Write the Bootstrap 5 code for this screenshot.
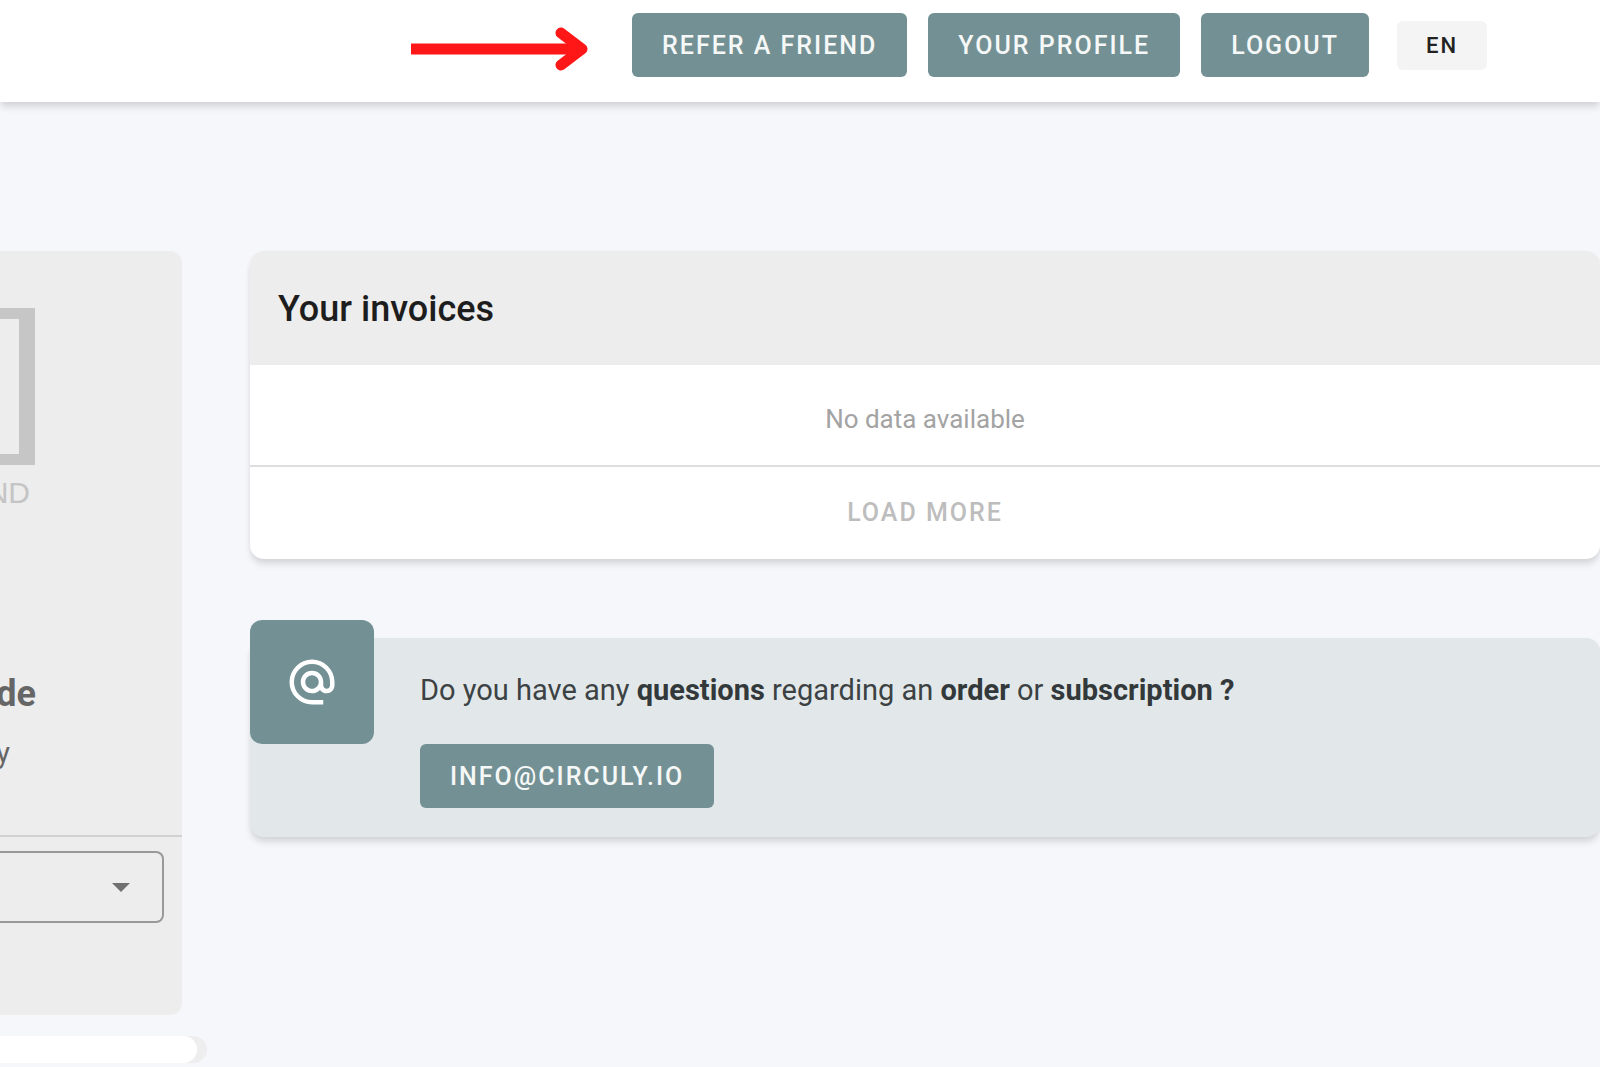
<!DOCTYPE html>
<html lang="en">
<head>
<meta charset="utf-8">
<meta name="viewport" content="width=device-width, initial-scale=1">
<title>Your account</title>
<link rel="stylesheet" href="https://cdn.jsdelivr.net/npm/bootstrap@5.3.0/dist/css/bootstrap.min.css">
<style>
  :root { --teal: #739194; --soft: #ededed; --drop: 0 6px 7px -1px rgba(0,0,0,.13), 0 1px 4px rgba(0,0,0,.03); }
  body { background: #f5f7fb; font-family: Roboto, "Liberation Sans", sans-serif; overflow-x: hidden; }
  .topbar { min-height: 102px; padding: 13px 113px 25px 0; gap: 21px; box-shadow: var(--drop); }
  .pointer { width: 178px; height: 44px; margin: 7px 22px 0 0; }
  .btn-teal { --bs-btn-color: #f6f8f8; --bs-btn-bg: var(--teal); --bs-btn-hover-color: #fff; --bs-btn-hover-bg: #65868a;
    --bs-btn-active-bg: #5b7b7f; --bs-btn-active-color: #fff; --bs-btn-border-radius: 6px; --bs-btn-border-width: 0;
    --bs-btn-padding-x: 30px; --bs-btn-padding-y: 0; --bs-btn-font-size: 25px; --bs-btn-font-weight: 500;
    height: 64px; line-height: 65px; letter-spacing: 2px; }
  .btn-lang { --bs-btn-bg: #f4f4f4; --bs-btn-color: #222; --bs-btn-hover-bg: #e8e8e8; --bs-btn-border-width: 0;
    --bs-btn-border-radius: 6px; --bs-btn-padding-x: 29px; --bs-btn-padding-y: 0; --bs-btn-font-size: 22px;
    --bs-btn-font-weight: 500; height: 49px; line-height: 49px; letter-spacing: 2px; margin-left: 7px; }
  .page-body { padding-top: 149px; gap: 43px; }
  .side-col { width: 207px; }
  .product { width: 182px; height: 764px; background: var(--soft); border-radius: 0 12px 12px 0; padding-top: 57px; }
  .brand-frame { width: 35px; height: 157px; border: solid #c6c6c6; border-width: 11px 16px 11px 0; }
  .brand-text { width: 30px; font: 30px/40px "Liberation Sans", sans-serif; color: #c4c4c4; margin-top: 8px; }
  .clip-end { display: flex; justify-content: flex-end; overflow: hidden; white-space: nowrap; }
  .product-name { width: 36px; font-size: 36px; line-height: 44px; font-weight: 700; color: #666; margin: 159px 0 0; }
  .product-by { width: 10px; font-size: 29px; line-height: 36px; color: #666; margin: 19px 0 0; }
  .product-foot { border-top: 2px solid #d2d2d2; padding: 14px 18px 0 0; margin-top: 64px; }
  .picker { height: 72px; background-color: transparent; border: 2px solid #999; border-left: 0; border-radius: 0 8px 8px 0;
    background-image: url("data:image/svg+xml,%3csvg xmlns='http://www.w3.org/2000/svg' viewBox='0 0 18 9'%3e%3cpath fill='%23707070' d='M0 0h18L9 9z'/%3e%3c/svg%3e");
    background-size: 18px 9px; background-position: right 32px center; }
  .strip { height: 27px; margin-top: 21px; background: #eee; border-radius: 0 14px 14px 0; padding-right: 10px; }
  .strip-fill { height: 27px; background: #fff; border-radius: 0 14px 14px 0; }
  .main-col { gap: 79px; min-width: 0; }
  .panel { border: 0; border-radius: 14px; box-shadow: var(--drop); }
  .panel-head { background: var(--soft); border: 0; border-radius: 14px 14px 0 0 !important; padding: 36px 28px 34px; }
  .panel-title { font-size: 36px; line-height: 44px; font-weight: 500; color: #1d1d1d; }
  .empty-row { height: 102px; line-height: 36px; padding-top: 36px; font-size: 26px; color: #a3a3a3; border-bottom: 2px solid #dedede; }
  .btn-more { height: 92px; font-size: 25px; font-weight: 500; letter-spacing: 2px; border: 0; }
  .btn-more:disabled { color: #bdbdbd; opacity: 1; }
  .help { background: #e2e8e9; min-height: 199px; }
  .help-icon { width: 124px; height: 124px; margin-top: -18px; background: var(--teal); border-radius: 12px; }
  .help-body { padding: 33px 0 29px 46px; }
  .help-text { font-size: 29px; line-height: 38px; margin-bottom: 35px; color: #3c4244; }
  .help-text strong { font-weight: 700; color: #33393b; }
</style>
<script src="https://cdn.jsdelivr.net/npm/bootstrap@5.3.0/dist/js/bootstrap.bundle.min.js"></script>
</head>
<body>
<header class="topbar bg-white d-flex align-items-center justify-content-end">
  <svg class="pointer" viewBox="0 0 178 44" aria-hidden="true">
    <path d="M0 22H166" fill="none" stroke="#ff1616" stroke-width="11"/>
    <path d="M150 6 171 22 150 38" fill="none" stroke="#ff1616" stroke-width="11" stroke-linecap="round" stroke-linejoin="round"/>
  </svg>
  <button type="button" class="btn btn-teal">REFER A FRIEND</button>
  <button type="button" class="btn btn-teal">YOUR PROFILE</button>
  <button type="button" class="btn btn-teal">LOGOUT</button>
  <button type="button" class="btn btn-lang">EN</button>
</header>
<main class="page-body d-flex align-items-start">
  <aside class="side-col flex-shrink-0">
    <section class="product">
      <div class="brand-frame"></div>
      <div class="brand-text clip-end">ND</div>
      <h2 class="product-name clip-end">de</h2>
      <p class="product-by clip-end">y</p>
      <div class="product-foot">
        <select class="form-select picker" aria-label="Option"><option></option></select>
      </div>
    </section>
    <div class="strip"><div class="strip-fill"></div></div>
  </aside>
  <div class="main-col d-flex flex-column flex-grow-1">
    <section class="card panel">
      <div class="card-header panel-head"><h1 class="panel-title mb-0">Your invoices</h1></div>
      <div class="empty-row text-center">No data available</div>
      <button type="button" class="btn btn-more w-100" disabled>LOAD MORE</button>
    </section>
    <section class="card panel help flex-row align-items-start">
      <div class="help-icon d-flex align-items-center justify-content-center flex-shrink-0">
        <svg width="54" height="54" viewBox="0 0 24 24" fill="#fff" aria-hidden="true"><path d="M12,15C12.81,15 13.5,14.7 14.11,14.11C14.7,13.5 15,12.81 15,12C15,11.19 14.7,10.5 14.11,9.89C13.5,9.3 12.81,9 12,9C11.19,9 10.5,9.3 9.89,9.89C9.3,10.5 9,11.19 9,12C9,12.81 9.3,13.5 9.89,14.11C10.5,14.7 11.19,15 12,15M12,2C14.75,2 17.1,3 19.05,4.95C21,6.9 22,9.25 22,12V13.45C22,14.45 21.65,15.3 21,16C20.3,16.67 19.5,17 18.5,17C17.3,17 16.31,16.5 15.56,15.5C14.56,16.5 13.38,17 12,17C10.63,17 9.45,16.5 8.46,15.54C7.5,14.55 7,13.38 7,12C7,10.63 7.5,9.45 8.46,8.46C9.45,7.5 10.63,7 12,7C13.38,7 14.55,7.5 15.54,8.46C16.5,9.45 17,10.63 17,12V13.45C17,13.86 17.16,14.22 17.46,14.53C17.76,14.84 18.11,15 18.5,15C18.92,15 19.27,14.84 19.57,14.53C19.87,14.22 20,13.86 20,13.45V12C20,9.81 19.23,7.93 17.65,6.35C16.07,4.77 14.19,4 12,4C9.81,4 7.93,4.77 6.35,6.35C4.77,7.93 4,9.81 4,12C4,14.19 4.77,16.07 6.35,17.65C7.93,19.23 9.81,20 12,20H17V22H12C9.25,22 6.9,21 4.95,19.05C3,17.1 2,14.75 2,12C2,9.25 3,6.9 4.95,4.95C6.9,3 9.25,2 12,2Z"/></svg>
      </div>
      <div class="help-body">
        <p class="help-text">Do you have any <strong>questions</strong> regarding an <strong>order</strong> or <strong>subscription ?</strong></p>
        <a class="btn btn-teal" href="mailto:info@circuly.io">INFO@CIRCULY.IO</a>
      </div>
    </section>
  </div>
</main>
</body>
</html>
